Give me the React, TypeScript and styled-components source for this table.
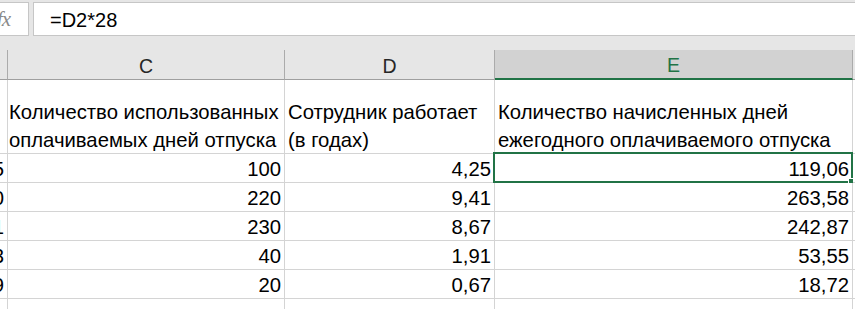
import React from 'react';
import styled, { createGlobalStyle } from 'styled-components';

const GlobalStyle = createGlobalStyle`
  html, body { margin: 0; padding: 0; background: #ffffff; overflow: hidden; }
  body { font-family: "Liberation Sans", Arial, sans-serif; color: #000; }
  * { box-sizing: border-box; }
`;

const GRID = '#d4d4d4';
const GREEN = '#217346';

const Page = styled.div`
  width: 855px;
  height: 309px;
  overflow: hidden;
  background: #ffffff;
`;

const FormulaBar = styled.div`
  display: flex;
  align-items: flex-start;
  gap: 4px;
  height: 50px;
  padding-top: 2px;
  background: #e6e6e6;
  overflow: hidden;
`;

const FxBox = styled.div`
  width: 29px;
  height: 34px;
  flex: none;
  display: flex;
  align-items: center;
  justify-content: flex-end;
  padding-right: 18px;
  background: #ffffff;
  border: 1px solid #c6c6c6;
  border-left: none;
  overflow: hidden;
`;

const FxGlyph = styled.span`
  font-family: "Liberation Serif", "DejaVu Serif", serif;
  font-style: italic;
  font-size: 21px;
  line-height: 1;
  color: #8a8a8a;
  white-space: nowrap;
  letter-spacing: -1px;
`;

const FormulaInput = styled.div`
  flex: 1;
  height: 34px;
  display: flex;
  align-items: center;
  padding: 2px 0 0 16px;
  background: #ffffff;
  border: 1px solid #c6c6c6;
  border-right: none;
  font-size: 20px;
  white-space: nowrap;
`;

const Sheet = styled.div`
  display: grid;
  grid-template-columns: 8px 277px 210px 358px 1fr;
  grid-template-rows: 30px 74px repeat(6, 29px);
`;

const HeaderCell = styled.div<{ $selected?: boolean; $last?: boolean }>`
  display: flex;
  align-items: center;
  justify-content: center;
  padding-top: 3px;
  font-size: 19.5px;
  background: ${(p) => (p.$selected ? '#d2d2d2' : '#e6e6e6')};
  color: ${(p) => (p.$selected ? GREEN : '#262626')};
  border-right: ${(p) => (p.$last ? 'none' : '1px solid #ababab')};
  border-bottom: ${(p) => (p.$selected ? `2px solid ${GREEN}` : '1px solid #9f9f9f')};
  overflow: hidden;
`;

const Cell = styled.div<{ $align?: 'left' | 'right'; $padLeft?: number }>`
  position: relative;
  display: flex;
  align-items: flex-end;
  justify-content: ${(p) => (p.$align === 'right' ? 'flex-end' : 'flex-start')};
  padding: 0 3px 0 ${(p) => (p.$padLeft ?? 3)}px;
  background: #ffffff;
  border-right: 1px solid ${GRID};
  border-bottom: 1px solid ${GRID};
  font-size: 20.3px;
  line-height: 26px;
  white-space: nowrap;
`;

const WrapText = styled.div`
  white-space: normal;
  line-height: 28px;
  margin-bottom: -1px;
`;

const SelectionFrame = styled.div`
  position: absolute;
  top: -2px;
  left: -2px;
  right: -1px;
  bottom: -1px;
  border: 2px solid ${GREEN};
  pointer-events: none;
`;

const FillHandle = styled.div`
  position: absolute;
  right: -4px;
  bottom: -4px;
  width: 7px;
  height: 7px;
  background: ${GREEN};
  border: 1px solid #ffffff;
`;

const rows: [string, string, string, string][] = [
  ['1255', '100', '4,25', '119,06'],
  ['2340', '220', '9,41', '263,58'],
  ['2131', '230', '8,67', '242,87'],
  ['1023', '40', '1,91', '53,55'],
  ['1219', '20', '0,67', '18,72'],
];

export default function App() {
  return (
    <Page>
      <GlobalStyle />
      <FormulaBar>
        <FxBox>
          <FxGlyph>fx</FxGlyph>
        </FxBox>
        <FormulaInput>=D2*28</FormulaInput>
      </FormulaBar>
      <Sheet>
        <HeaderCell />
        <HeaderCell>C</HeaderCell>
        <HeaderCell>D</HeaderCell>
        <HeaderCell $selected>E</HeaderCell>
        <HeaderCell $last />

        <Cell />
        <Cell $padLeft={1}>
          <WrapText>Количество использованных оплачиваемых дней отпуска</WrapText>
        </Cell>
        <Cell>
          <WrapText>Сотрудник работает (в годах)</WrapText>
        </Cell>
        <Cell>
          <WrapText>Количество начисленных дней ежегодного оплачиваемого отпуска</WrapText>
        </Cell>
        <Cell />

        {rows.map((r, i) => (
          <React.Fragment key={i}>
            <Cell $align="right">{r[0]}</Cell>
            <Cell $align="right">{r[1]}</Cell>
            <Cell $align="right">{r[2]}</Cell>
            <Cell $align="right">
              {r[3]}
              {i === 0 && (
                <SelectionFrame>
                  <FillHandle />
                </SelectionFrame>
              )}
            </Cell>
            <Cell />
          </React.Fragment>
        ))}

        <Cell />
        <Cell />
        <Cell />
        <Cell />
        <Cell />
      </Sheet>
    </Page>
  );
}
